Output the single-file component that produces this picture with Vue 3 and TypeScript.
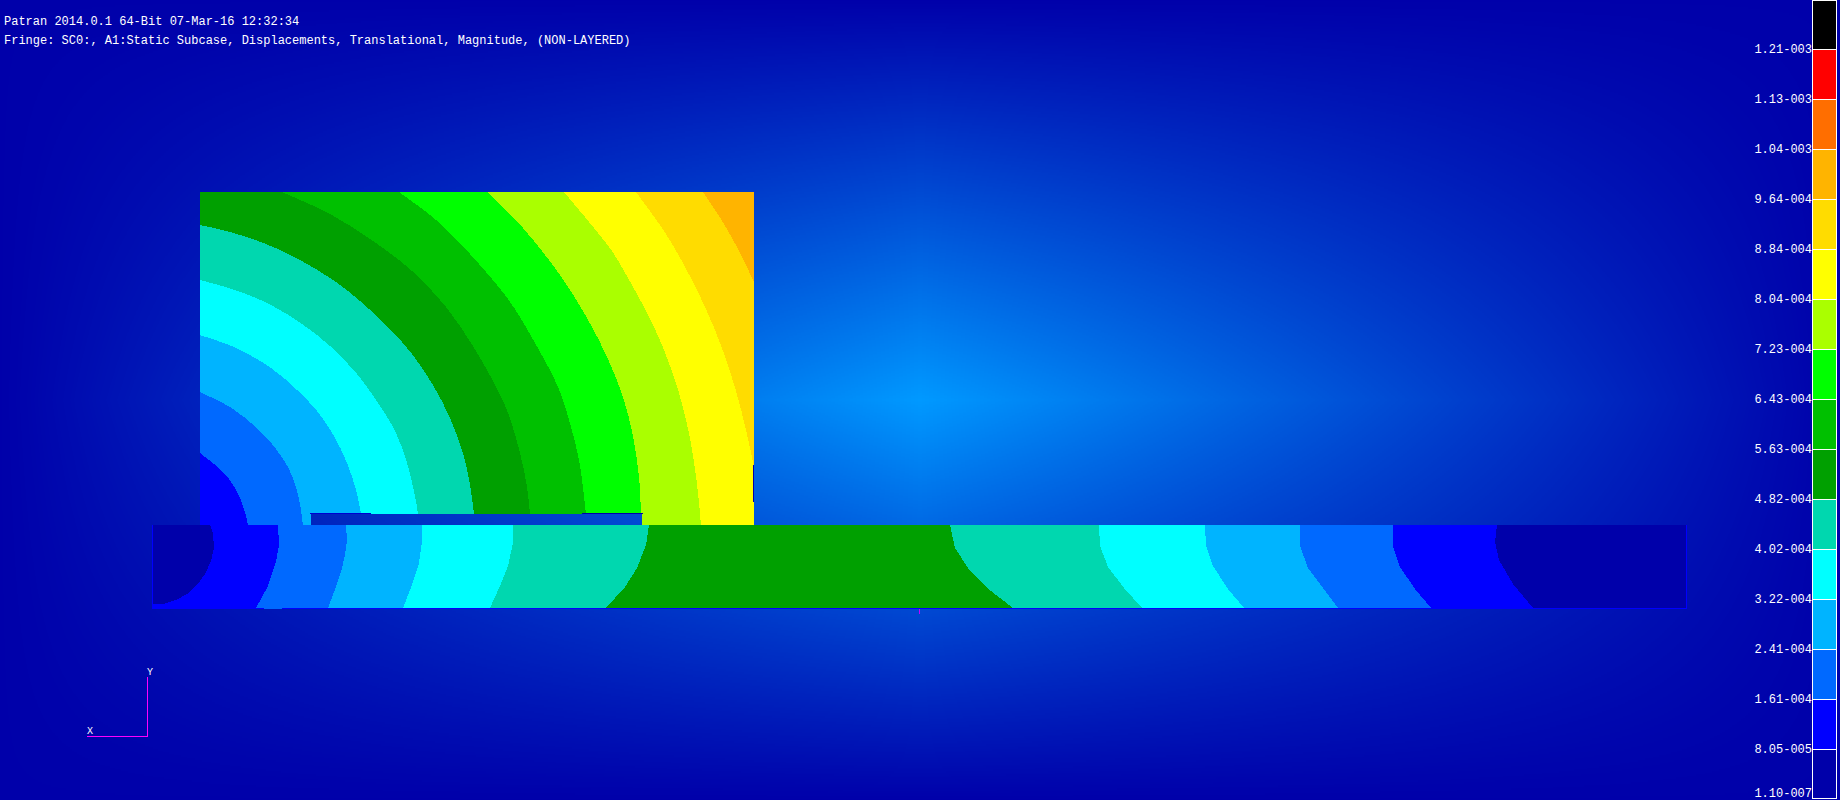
<script setup lang="ts">
interface Band {
  color: string
  label: string
}

interface Region {
  color: string
  points: string
}

interface Contour {
  color: string
  curve: [number, number][]
}

const titleLines: string[] = [
  'Patran 2014.0.1 64-Bit 07-Mar-16 12:32:34',
  'Fringe: SC0:, A1:Static Subcase, Displacements, Translational, Magnitude, (NON-LAYERED)',
]

const bands: Band[] = [
  { color: '#000000', label: '1.21-003' },
  { color: '#ff0000', label: '1.13-003' },
  { color: '#ff6e00', label: '1.04-003' },
  { color: '#ffb400', label: '9.64-004' },
  { color: '#ffdc00', label: '8.84-004' },
  { color: '#ffff00', label: '8.04-004' },
  { color: '#aaff00', label: '7.23-004' },
  { color: '#00ff00', label: '6.43-004' },
  { color: '#00c000', label: '5.63-004' },
  { color: '#00a000', label: '4.82-004' },
  { color: '#00d7af', label: '4.02-004' },
  { color: '#00ffff', label: '3.22-004' },
  { color: '#00b4ff', label: '2.41-004' },
  { color: '#0069ff', label: '1.61-004' },
  { color: '#0000ff', label: '8.05-005' },
  { color: '#0000aa', label: '1.10-007' },
]

// Outermost contour first; each inner one is painted over it.
const blockContours: Contour[] = [
  { color: '#ffdc00', curve: [[703, 192], [724, 224], [740, 253], [754, 282]] },
  { color: '#ffff00', curve: [[636, 192], [664, 231], [684, 265], [705, 307], [722, 348], [736, 391], [746, 430], [754, 467]] },
  { color: '#aaff00', curve: [[564, 192], [606, 243], [624, 271], [647, 313], [664, 350], [679, 393], [690, 438], [697, 484], [701, 525]] },
  { color: '#00ff00', curve: [[487, 192], [523, 228], [560, 275], [587, 318], [608, 359], [623, 397], [633, 436], [639, 477], [641, 514]] },
  { color: '#00c000', curve: [[399, 192], [436, 220], [470, 254], [508, 299], [535, 343], [558, 387], [571, 427], [580, 466], [586, 514]] },
  { color: '#00a000', curve: [[282, 192], [330, 214], [373, 241], [412, 271], [446, 307], [471, 343], [492, 379], [508, 413], [520, 453], [527, 487], [530, 514]] },
  { color: '#00d7af', curve: [[200, 225], [230, 232], [266, 244], [300, 260], [333, 280], [360, 301], [388, 327], [412, 354], [433, 385], [450, 418], [463, 453], [470, 485], [474, 514]] },
  { color: '#00ffff', curve: [[200, 280], [235, 290], [271, 305], [302, 324], [330, 346], [357, 374], [380, 406], [396, 433], [407, 463], [415, 496], [418, 514]] },
  { color: '#00b4ff', curve: [[200, 335], [236, 348], [271, 368], [297, 390], [317, 411], [334, 436], [347, 463], [356, 490], [361, 514]] },
  { color: '#0069ff', curve: [[200, 392], [233, 409], [262, 433], [281, 456], [292, 476], [299, 499], [303, 525]] },
  { color: '#0000ff', curve: [[200, 453], [223, 472], [236, 490], [244, 509], [248, 525]] },
]

const slabRegions: Region[] = [
  { color: '#0000aa', points: '153,525 1686,525 1686,608 153,608' },
  { color: '#0000ff', points: '153,525 1497,525 1495,542 1499,560 1513,584 1533,608 153,608' },
  { color: '#0069ff', points: '153,525 1393,525 1393,547 1400,567 1415,589 1431,608 153,608' },
  { color: '#00b4ff', points: '153,525 1300,525 1300,546 1308,568 1323,588 1338,608 153,608' },
  { color: '#00ffff', points: '153,525 1205,525 1206,546 1213,566 1228,589 1244,608 153,608' },
  { color: '#00d7af', points: '153,525 1099,525 1100,546 1108,567 1124,588 1142,608 153,608' },
  { color: '#00a000', points: '153,525 950,525 955,548 970,571 987,588 1013,608 153,608' },
  { color: '#00d7af', points: '153,525 649,525 646,545 637,568 625,587 606,608 153,608' },
  { color: '#00ffff', points: '153,525 513,525 513,543 508,566 500,586 490,608 153,608' },
  { color: '#00b4ff', points: '153,525 422,525 422,542 419,563 412,585 403,608 153,608' },
  { color: '#0069ff', points: '153,525 346,525 347,540 345,555 341,572 334,592 328,608 153,608' },
  { color: '#0000ff', points: '153,525 278,525 279,545 276,562 268,586 256,608 153,608' },
  { color: '#0000aa', points: '153,525 210,525 213,533 214,548 211,561 205,574 197,585 187,594 176,600 163,604 153,604' },
]

// Catmull-Rom spline through the contour, closed around the lower left corner.
function contourPath(curve: [number, number][]): string {
  const last = curve.length - 1
  const first = curve[0]
  const end = curve[last]
  let d = `M200 ${first[1]}L${first[0]} ${first[1]}`
  for (let i = 0; i < last; i++) {
    const a = curve[Math.max(i - 1, 0)]
    const b = curve[i]
    const c = curve[i + 1]
    const e = curve[Math.min(i + 2, last)]
    d += `C${b[0] + (c[0] - a[0]) / 6} ${b[1] + (c[1] - a[1]) / 6}`
    d += ` ${c[0] - (e[0] - b[0]) / 6} ${c[1] - (e[1] - b[1]) / 6}`
    d += ` ${c[0]} ${c[1]}`
  }
  return `${d}L${end[0]} 525L200 525Z`
}
</script>

<template>
  <main class="viewport">
    <div class="glow"></div>

    <svg class="model" viewBox="0 0 1840 800" role="img" aria-label="Displacement fringe plot">
      <defs>
        <clipPath id="block-outline">
          <path d="M200 192H754V525H642V514H311V525H200Z" />
        </clipPath>
      </defs>
      <g shape-rendering="crispEdges">
        <g clip-path="url(#block-outline)">
          <path d="M200 192H754V525H200Z" fill="#ffb400" />
          <path v-for="c in blockContours" :key="c.color" :d="contourPath(c.curve)" :fill="c.color" />
        </g>
        <path d="M310 513H371V514H310Z" fill="#0000d0" />
        <path d="M582 513H643V514H582ZM753 465H754V502H753Z" fill="#0000aa" />
        <polygon v-for="(r, i) in slabRegions" :key="i" :points="r.points" :fill="r.color" />
        <path d="M152 525H153V608H1686V525H1687V609H152Z" fill="#0000ff" />
        <path d="M264 608H282V609H264Z" fill="#0069ff" />
        <path d="M919 609H920V614H919Z" fill="#c800ff" />
        <path d="M147 677H148V737H87V736H147Z" fill="#ff00ff" />
      </g>
      <text class="axis" x="147" y="675">Y</text>
      <text class="axis" x="87" y="734">X</text>
    </svg>

    <header class="titles">
      <p v-for="line in titleLines" :key="line">{{ line }}</p>
    </header>

    <ol class="legend" aria-label="Fringe values">
      <li v-for="band in bands" :key="band.label">
        <span class="value">{{ band.label }}</span>
        <span class="swatch" :style="{ backgroundColor: band.color }"></span>
      </li>
    </ol>
  </main>
</template>

<style>
body {
  margin: 0;
  background: #0000aa;
}
</style>

<style scoped>
.viewport {
  position: relative;
  display: flex;
  justify-content: space-between;
  height: 100vh;
  overflow: hidden;
  background: #0000aa;
  color: #fff;
  font-family: "Liberation Mono", monospace;
  font-size: 12px;
}

.glow {
  position: absolute;
  inset: 0;
  background: #0099ff;
  mask-image:
    linear-gradient(to right, transparent, #000 50%, transparent),
    linear-gradient(to bottom, transparent, #000 50%, transparent);
  mask-composite: intersect;
}

.model {
  position: absolute;
  inset: 0;
  width: 100%;
  height: 100%;
}

.axis {
  fill: #fff;
  font-size: 10px;
}

.titles {
  position: relative;
  padding: 13px 4px;
}

.titles p {
  margin: 0;
  line-height: 19px;
  white-space: pre;
}

.legend {
  position: relative;
  display: flex;
  flex-direction: column;
  margin: 0;
  padding: 0 3px 0 0;
  list-style: none;
}

.legend li {
  display: flex;
  flex: 1;
  align-items: flex-end;
  min-height: 0;
}

.value {
  margin-bottom: -7px;
  line-height: 14px;
}

.swatch {
  box-sizing: border-box;
  align-self: stretch;
  width: 25px;
  border: 1px solid #fff;
  border-top-width: 0;
}

.legend li:first-child .swatch {
  border-top-width: 1px;
}

.legend li:last-child .value {
  margin-bottom: -1px;
}

.legend li:last-child .swatch {
  margin-bottom: 1px;
}
</style>
